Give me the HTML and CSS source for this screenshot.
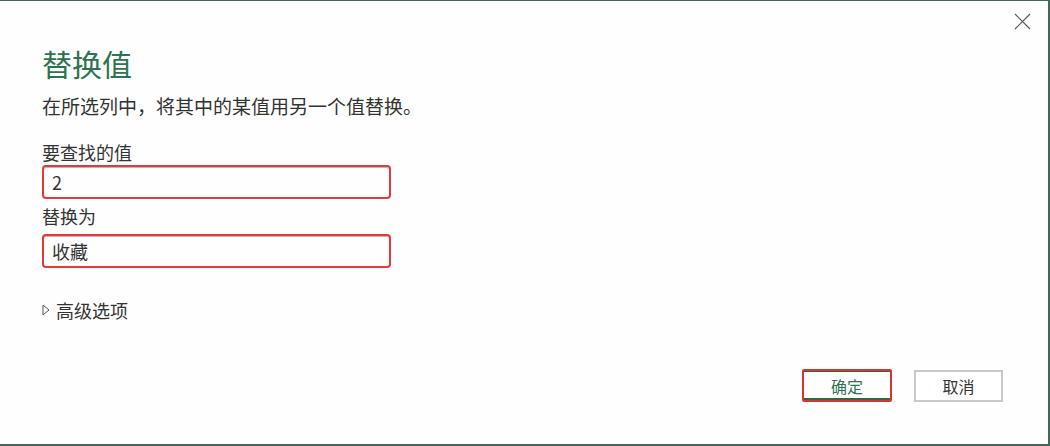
FILE: index.html
```html
<!DOCTYPE html>
<html lang="zh-CN">
<head>
  <meta charset="UTF-8" />
  <title>替换值</title>
  <link rel="stylesheet" href="styles.css">
</head>
<body>
  <!-- 替换值对话框 -->
  <div class="dialog">
    <button class="close-btn" aria-label="关闭">
      <svg width="17" height="17" viewBox="0 0 17 17"><path d="M1 1 L16 16 M16 1 L1 16" stroke="#5a5a5a" stroke-width="1.2" fill="none"/></svg>
    </button>

    <h1 class="title">替换值</h1>
    <p class="desc">在所选列中，将其中的某值用另一个值替换。</p>

    <label class="field-label">要查找的值</label>
    <div class="field">2</div>

    <label class="field-label second">替换为</label>
    <div class="field">收藏</div>

    <div class="advanced">
      <svg width="8" height="12" viewBox="0 0 8 12"><path d="M1 1 L7 6 L1 11 Z" stroke="#555" stroke-width="1" fill="none"/></svg>
      <span>高级选项</span>
    </div>

    <div class="actions">
      <button class="btn btn-ok">确定</button>
      <button class="btn btn-cancel">取消</button>
    </div>
  </div>
</body>
</html>
```

FILE: styles.css
```css
/* 全局 */
html, body {
  margin: 0;
  padding: 0;
  background: #fff;
  font-family: "Noto Sans CJK SC", "Noto Sans", sans-serif;
  color: #333;
}

/* 对话框外框 */
.dialog {
  position: relative;
  box-sizing: border-box;
  width: 1050px;
  height: 446px;
  padding: 42px 45px 0 42px;
  border-top: 1px solid #3e6b58;
  border-right: 2px solid #3e6b58;
  border-bottom: 2px solid #3e6b58;
  background: #fefefe;
}

/* 右上角关闭按钮 */
.close-btn {
  position: absolute;
  top: 12px;
  right: 17px;
  padding: 0;
  border: none;
  background: none;
  line-height: 0;
}

.title {
  margin: 0;
  font-size: 30px;
  line-height: 40px;
  font-weight: normal;
  color: #2e7350;
}

.desc {
  margin: 10px 0 0;
  font-size: 19px;
  line-height: 26px;
}

.field-label {
  display: block;
  margin-top: 21px;
  font-size: 18px;
  line-height: 24px;
}

.field-label.second {
  margin-top: 5px;
}

/* 输入框（红色描边） */
.field {
  box-sizing: border-box;
  width: 349px;
  height: 34px;
  margin-top: 1px;
  padding-left: 8px;
  border: 2px solid #e2393a;
  border-radius: 4px;
  box-shadow: inset 0 1px 0 #b9b9b9;
  font-size: 18px;
  line-height: 30px;
  color: #333;
}

.field-label.second + .field {
  margin-top: 6px;
}

/* 高级选项 */
.advanced {
  display: flex;
  align-items: center;
  gap: 6px;
  margin-top: 30px;
  font-size: 18px;
  line-height: 24px;
}

/* 底部按钮 */
.actions {
  display: flex;
  justify-content: flex-end;
  gap: 22px;
  margin-top: 47px;
}

.btn {
  box-sizing: border-box;
  width: 89px;
  height: 33px;
  padding: 0;
  background: #fff;
  font-family: inherit;
  font-size: 16px;
}

.btn-ok {
  width: 90px;
  border: 2px solid #d83430;
  border-radius: 2px;
  box-shadow: inset 0 -2px 0 #3c6342, inset 0 1px 0 #3c6342;
  color: #2e7350;
}

.btn-cancel {
  height: 32px;
  margin-top: 1px;
  border: 2px solid #c9c9c9;
  color: #333;
}
```
